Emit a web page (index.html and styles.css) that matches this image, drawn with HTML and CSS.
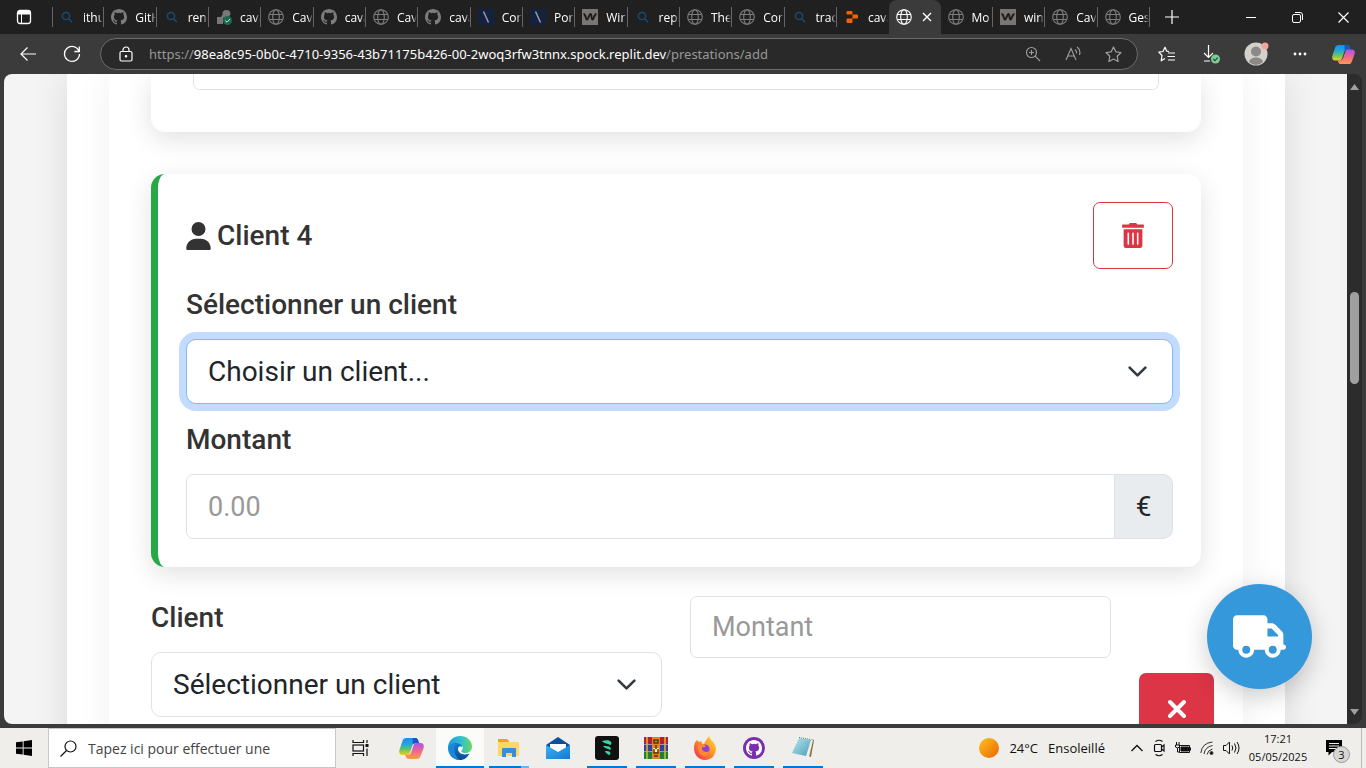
FILE: index.html
```html
<!DOCTYPE html>
<html lang="fr">
<head>
<meta charset="utf-8">
<meta name="viewport" content="width=device-width, initial-scale=1">
<title>Ajouter une prestation</title>
<link rel="stylesheet" href="styles.css">
</head>
<body>
<svg class="defs" aria-hidden="true">
  <defs>
    <linearGradient id="cp1" x1="0" y1="0" x2="0" y2="1"><stop offset="0" stop-color="#1593e8"/><stop offset=".35" stop-color="#22a6dc"/><stop offset=".65" stop-color="#5dc36a"/><stop offset="1" stop-color="#f7cb1d"/></linearGradient>
    <linearGradient id="cp2" x1="0" y1="0" x2="0" y2="1"><stop offset="0" stop-color="#a955ec"/><stop offset=".5" stop-color="#f2658e"/><stop offset="1" stop-color="#ff9b4a"/></linearGradient>
    <linearGradient id="edge1" x1="0" y1="0" x2="1" y2="0"><stop offset="0" stop-color="#2196dc"/><stop offset=".55" stop-color="#2fc2cf"/><stop offset="1" stop-color="#68d95d"/></linearGradient>
    <linearGradient id="edge2" x1="0" y1="0" x2="0" y2="1"><stop offset="0" stop-color="#1685d8"/><stop offset="1" stop-color="#0b4a93"/></linearGradient>
    <linearGradient id="sun" x1="0" y1="0" x2="1" y2="1"><stop offset="0" stop-color="#ffc31c"/><stop offset="1" stop-color="#ea6506"/></linearGradient>
    <linearGradient id="fox" x1="1" y1="0" x2="0" y2="1"><stop offset="0" stop-color="#ffe43c"/><stop offset=".45" stop-color="#ff9425"/><stop offset="1" stop-color="#f0235f"/></linearGradient>
    <linearGradient id="mail" x1="0" y1="0" x2="1" y2="1"><stop offset="0" stop-color="#35b4f4"/><stop offset="1" stop-color="#1677d4"/></linearGradient>
    <linearGradient id="pad" x1="0" y1="0" x2="1" y2="1"><stop offset="0" stop-color="#b9e6ef"/><stop offset="1" stop-color="#4d9fb6"/></linearGradient>
    <symbol id="globe" viewBox="0 0 16 16"><g fill="none" stroke="currentColor" stroke-width="1.1"><circle cx="8" cy="8" r="7.3"/><ellipse cx="8" cy="8" rx="3.3" ry="7.3"/><path d="M1.3 5.5h13.4M1.3 10.5h13.4"/></g></symbol>
    <symbol id="github" viewBox="0 0 16 16"><path fill="currentColor" d="M8 0C3.58 0 0 3.58 0 8c0 3.54 2.29 6.53 5.47 7.59.4.07.55-.17.55-.38 0-.19-.01-.82-.01-1.49-2.01.37-2.53-.49-2.69-.94-.09-.23-.48-.94-.82-1.13-.28-.15-.68-.52-.01-.53.63-.01 1.08.58 1.23.82.72 1.21 1.87.87 2.33.66.07-.52.28-.87.51-1.07-1.78-.2-3.64-.89-3.64-3.95 0-.87.31-1.59.82-2.15-.08-.2-.36-1.02.08-2.12 0 0 .67-.21 2.2.82a7.6 7.6 0 0 1 4 0c1.53-1.04 2.2-.82 2.2-.82.44 1.1.16 1.92.08 2.12.51.56.82 1.27.82 2.15 0 3.07-1.87 3.75-3.65 3.95.29.25.54.73.54 1.48 0 1.07-.01 1.93-.01 2.2 0 .21.15.46.55.38A8.01 8.01 0 0 0 16 8c0-4.42-3.58-8-8-8z"/></symbol>
    <symbol id="search" viewBox="0 0 16 16"><g fill="none" stroke="#194a70" stroke-width="1.5"><circle cx="7" cy="7" r="3.6"/><path d="M9.7 9.7l3.3 3.5"/></g></symbol>
    <symbol id="slash" viewBox="0 0 16 16"><path fill="#14213f" d="M0 0h16v16H0z"/><path stroke="#9a9da5" stroke-width="1.5" d="M5.500 2.500l5 11"/></symbol>
    <symbol id="wave" viewBox="0 0 16 16"><path fill="#7a7770" d="M0 0h16v16H0z"/><path fill="none" stroke="#1c1c1a" stroke-width="2" d="M1.500 5c2.500 0 2 5.500 3.500 5.500S7 5 8.500 5 9 10.500 10.500 10.500 12 5 14.500 5"/></symbol>
    <symbol id="replit" viewBox="0 0 16 16"><path fill="#f26207" d="M3 2h4.500q1 0 1 1v2.500H3.500q-1 0-1-1V3zM8.500 5.500H13q1 0 1 1v2q0 1-1 1H8.500zM3.500 9.500h5V13q0 1-1 1H3.500q-1 0-1-1v-2.500q0-1 1-1z"/></symbol>
    <symbol id="check" viewBox="0 0 16 16"><path fill="#777" d="M1 8h4L6.500 5.500C6 2.500 8 1 10.500 1s4 1.500 4 4L13 8 7 9v6H1z"/><circle cx="11.500" cy="11.500" r="4.500" fill="#176c50"/><path d="M9.300 11.500l1.700 1.700 3-3.200" fill="none" stroke="#ddd"/></symbol>
    <symbol id="copilot" viewBox="0 0 24 24"><path fill="url(#cp1)" d="M7 2h8.500c2 0 2.700 1.300 3.200 3l.6 2h-3.800c-1.600 0-2.300 1-2.700 2.200l-2.100 6.500c-.5 1.500-1.500 2.500-3.200 2.500H3.300C.6 18.200-.3 16 .4 13.400L3.300 4.800C3.900 3 5 2 7 2z"/><path fill="#1857c2" d="M13 2h2.500c2 0 2.700 1.300 3.200 3l.6 2h-3.800c-1 0-1.700.3-2.200 1z"/><path fill="url(#cp2)" d="M17 22H9.500c-2 0-2.700-1.300-3.200-3l-.4-1h2.600c1.700 0 2.700-1 3.200-2.500L13.900 9c.4-1.200 1.100-2.200 2.700-2.200h4.100c2.700 0 3.600 2.200 2.900 4.800l-2.900 7.600c-.6 1.800-1.700 2.800-3.700 2.800z"/></symbol>
  </defs>
</svg>

<header class="tabbar">
  <button class="tab-menu" aria-label="Menu des onglets"><svg width="16" height="16" viewBox="0 0 16 16"><rect x="1.500" y="1.500" width="13" height="13" rx="2.500" fill="none" stroke="#fff" stroke-width="1.300"/><path d="M2 2h12v3.500H2z" fill="#fff"/><path d="M5.500 5v9.500" stroke="#fff"/></svg></button>
  <nav class="tabs" aria-label="Onglets">
    <a class="tab" href="#"><svg class="fav"><use href="#search"/></svg><span>ithu</span></a>
    <a class="tab" href="#"><svg class="fav"><use href="#github"/></svg><span>GitH</span></a>
    <a class="tab" href="#"><svg class="fav"><use href="#search"/></svg><span>rend</span></a>
    <a class="tab" href="#"><svg class="fav"><use href="#check"/></svg><span>cava</span></a>
    <a class="tab" href="#"><svg class="fav"><use href="#globe"/></svg><span>Cav</span></a>
    <a class="tab" href="#"><svg class="fav"><use href="#github"/></svg><span>cava</span></a>
    <a class="tab" href="#"><svg class="fav"><use href="#globe"/></svg><span>Cav</span></a>
    <a class="tab" href="#"><svg class="fav"><use href="#github"/></svg><span>cava</span></a>
    <a class="tab" href="#"><svg class="fav"><use href="#slash"/></svg><span>Cor</span></a>
    <a class="tab" href="#"><svg class="fav"><use href="#slash"/></svg><span>Por</span></a>
    <a class="tab" href="#"><svg class="fav"><use href="#wave"/></svg><span>Wir</span></a>
    <a class="tab" href="#"><svg class="fav"><use href="#search"/></svg><span>repl</span></a>
    <a class="tab" href="#"><svg class="fav"><use href="#globe"/></svg><span>The</span></a>
    <a class="tab" href="#"><svg class="fav"><use href="#globe"/></svg><span>Cor</span></a>
    <a class="tab" href="#"><svg class="fav"><use href="#search"/></svg><span>trac</span></a>
    <a class="tab before-active" href="#"><svg class="fav"><use href="#replit"/></svg><span>cava</span></a>
    <div class="tab active"><svg class="fav"><use href="#globe"/></svg><button class="tab-close" aria-label="Fermer l'onglet"><svg width="10" height="10" viewBox="0 0 10 10"><path d="M1 1l8 8M9 1L1 9" stroke="#fff" stroke-width="1.400"/></svg></button></div>
    <a class="tab" href="#"><svg class="fav"><use href="#globe"/></svg><span>Mo</span></a>
    <a class="tab" href="#"><svg class="fav"><use href="#wave"/></svg><span>win</span></a>
    <a class="tab" href="#"><svg class="fav"><use href="#globe"/></svg><span>Cav</span></a>
    <a class="tab" href="#"><svg class="fav"><use href="#globe"/></svg><span>Ges</span></a>
  </nav>
  <button class="new-tab" aria-label="Nouvel onglet"><svg width="14" height="14" viewBox="0 0 14 14"><path d="M7 0v14M0 7h14" stroke="#fff" stroke-width="1.200"/></svg></button>
  <div class="window-controls">
    <button aria-label="Réduire"><svg width="10" height="10"><path d="M0 5.500h10" stroke="#fff"/></svg></button>
    <button aria-label="Restaurer"><svg width="11" height="11" fill="none" stroke="#fff"><rect x=".5" y="2.500" width="8" height="8" rx="1.500"/><path d="M3 .5h5q2.500 0 2.500 2.500v5"/></svg></button>
    <button aria-label="Fermer"><svg width="11" height="11"><path d="M.5.5l10 10M10.500.5l-10 10" stroke="#fff" stroke-width="1.200"/></svg></button>
  </div>
</header>

<div class="toolbar">
  <div class="nav-buttons">
    <button aria-label="Retour"><svg width="16" height="14" viewBox="0 0 16 14" fill="none" stroke="#fff" stroke-width="1.200"><path d="M7.500.5L1 7l6.500 6.500M1 7h15"/></svg></button>
    <button aria-label="Actualiser"><svg width="18" height="18" viewBox="0 0 18 18" fill="none" stroke="#fff" stroke-width="1.300"><path d="M16 6.200A7.500 7.500 0 1 0 16.500 9M16.300 1.500v5h-5"/></svg></button>
  </div>
  <div class="address">
    <svg width="14" height="16" viewBox="0 0 14 16" fill="none" stroke="#fff" stroke-width="1.200"><rect x="1" y="5.500" width="12" height="9.500" rx="1.500"/><path d="M4 5.500V4a3 3 0 0 1 6 0v1.500"/><circle cx="7" cy="10.200" r=".7" fill="#fff"/></svg>
    <div class="url">https://<b>98ea8c95-0b0c-4710-9356-43b71175b426-00-2woq3rfw3tnnx.spock.replit.dev</b>/prestations/add</div>
    <div class="address-actions">
      <button aria-label="Zoom"><svg width="16" height="16" viewBox="0 0 16 16" fill="none" stroke="#a0a0a0" stroke-width="1.100"><circle cx="6.500" cy="6.500" r="5"/><path d="M10.200 10.200l4.800 4.800M4 6.500h5M6.500 4v5"/></svg></button>
      <button aria-label="Lecture à voix haute"><svg width="17" height="16" viewBox="0 0 17 16" fill="none" stroke="#a0a0a0" stroke-width="1.100"><path d="M1 14L6 2.500 11 14M2.800 10h6.400M10 3.500q2 1.500 1.500 4M12 1q4 3 2.500 8"/></svg></button>
      <button aria-label="Favori"><svg width="17" height="17" viewBox="0 0 17 17" fill="none" stroke="#a0a0a0" stroke-width="1.200" stroke-linejoin="round"><path d="M8.500 1l2.300 4.800 5.200.7-3.800 3.700.9 5.300-4.600-2.500-4.600 2.500.9-5.300L1 6.500l5.200-.7z"/></svg></button>
    </div>
  </div>
  <div class="toolbar-actions">
    <button aria-label="Favoris"><svg width="18" height="17" viewBox="0 0 18 17" fill="none" stroke="#fff" stroke-width="1.200" stroke-linejoin="round"><path d="M11 5.500L8.800 5.200 7 1.200 5 5.500.8 6.200 4 9.500l-.8 5.300L7 12.500M10 7h7M9.500 10.500H17M10 14h7"/></svg></button>
    <button aria-label="Téléchargements"><svg width="20" height="20" viewBox="0 0 20 20" fill="none" stroke="#fff" stroke-width="1.200"><path d="M7.500 1v12M3 9l4.500 4.500L12 9M3 17h6"/><circle cx="14.500" cy="15" r="4.500" fill="#7ecb97" stroke="none"/><path d="M12.300 15l1.700 1.700 2.700-3" stroke="#294a35"/></svg></button>
    <button aria-label="Profil"><svg width="26" height="26" viewBox="0 0 26 26"><circle cx="13" cy="13" r="11.500" fill="#d4d1cd"/><circle cx="13" cy="10.500" r="5" fill="#8d8986"/><path d="M6 21q1-4.500 7-4.500t7 4.500Q17 24 13 24t-7-3z" fill="#8d8986"/><circle cx="22" cy="5" r="3.500" fill="#f5a49c"/></svg></button>
    <button aria-label="Paramètres et plus"><svg width="14" height="4" fill="#fff"><circle cx="2" cy="2" r="1.400"/><circle cx="7" cy="2" r="1.400"/><circle cx="12" cy="2" r="1.400"/></svg></button>
    <button aria-label="Copilot"><svg width="23" height="23"><use href="#copilot"/></svg></button>
  </div>
</div>

<div class="frame">
  <main class="page">
    <div class="container">
      <form class="panel">
        <section class="card card-previous">
          <textarea class="control notes" aria-label="Notes"></textarea>
        </section>

        <section class="card card-client">
          <div class="card-header">
            <h2><svg width="25" height="28" viewBox="0 0 448 512" fill="currentColor"><path d="M224 256A128 128 0 1 0 224 0a128 128 0 1 0 0 256zm-45.700 48C79.800 304 0 383.800 0 482.300C0 498.700 13.300 512 29.700 512H418.300c16.400 0 29.700-13.300 29.700-29.700C448 383.800 368.200 304 269.700 304H178.300z"/></svg>Client 4</h2>
            <button type="button" class="btn-delete" aria-label="Supprimer le client"><svg width="22" height="25" viewBox="0 0 448 512" fill="currentColor"><path d="M32 464a48 48 0 0 0 48 48h288a48 48 0 0 0 48-48V128H32zm272-256a16 16 0 0 1 32 0v224a16 16 0 0 1-32 0zm-96 0a16 16 0 0 1 32 0v224a16 16 0 0 1-32 0zm-96 0a16 16 0 0 1 32 0v224a16 16 0 0 1-32 0zM432 32H312l-9.400-18.700A24 24 0 0 0 281.100 0H166.800a23.720 23.720 0 0 0-21.400 13.300L136 32H16A16 16 0 0 0 0 48v32a16 16 0 0 0 16 16h416a16 16 0 0 0 16-16V48a16 16 0 0 0-16-16z"/></svg></button>
          </div>
          <label for="client4">Sélectionner un client</label>
          <div class="select-wrap">
            <select id="client4" class="control focused"><option>Choisir un client...</option></select>
            <svg class="chevron" viewBox="0 0 16 16"><path d="M2 5l6 6 6-6"/></svg>
          </div>
          <label for="amount4">Montant</label>
          <div class="input-group">
            <input id="amount4" class="control" type="text" inputmode="decimal" placeholder="0.00">
            <span class="addon">€</span>
          </div>
        </section>

        <div class="row">
          <div class="row-client">
            <label for="client-row">Client</label>
            <div class="select-wrap">
              <select id="client-row" class="control"><option>Sélectionner un client</option></select>
              <svg class="chevron" viewBox="0 0 16 16"><path d="M2 5l6 6 6-6"/></svg>
            </div>
          </div>
          <input class="control row-amount" type="text" placeholder="Montant" aria-label="Montant">
          <button type="button" class="btn-remove" aria-label="Retirer"><svg width="20" height="20" viewBox="0 0 20 20"><path d="M3 3l14 14M17 3L3 17" stroke="#fff" stroke-width="4" stroke-linecap="round"/></svg></button>
        </div>
      </form>
    </div>
    <button class="fab" aria-label="Prestations"><svg width="53" height="43" viewBox="0 0 640 512" fill="currentColor"><path d="M48 0C21.500 0 0 21.500 0 48V368c0 26.500 21.500 48 48 48H64c0 53 43 96 96 96s96-43 96-96H384c0 53 43 96 96 96s96-43 96-96h32c17.700 0 32-14.300 32-32s-14.300-32-32-32V288 256 237.300c0-17-6.700-33.300-18.700-45.300L512 114.700c-12-12-28.300-18.700-45.300-18.700H416V48c0-26.500-21.500-48-48-48H48zM416 160h50.700L544 237.300V256H416V160zM112 416a48 48 0 1 1 96 0 48 48 0 1 1 -96 0zm368-48a48 48 0 1 1 0 96 48 48 0 1 1 0-96z"/></svg></button>
  </main>
  <div class="scrollbar" aria-hidden="true">
    <svg width="9" height="6" fill="#a0a0a0"><path d="M0 6L4.500 0 9 6z"/></svg>
    <div class="space-above"></div>
    <div class="thumb"></div>
    <div class="space-below"></div>
    <svg width="9" height="6" fill="#a0a0a0"><path d="M0 0h9L4.500 6z"/></svg>
  </div>
</div>

<footer class="taskbar">
  <button class="start" aria-label="Démarrer"><svg width="16" height="16" viewBox="0 0 16 16"><path d="M0 2.300L6.700 1.400v6.200H0zM7.600 1.200L16 0v7.600H7.600zM0 8.400h6.700v6.200L0 13.700zM7.600 8.400H16V16l-8.400-1.200z"/></svg></button>
  <div class="search-box">
    <svg width="17" height="17" viewBox="0 0 17 17" fill="none" stroke="#111" stroke-width="1.200"><circle cx="10.500" cy="6.500" r="5.500"/><path d="M6.500 10.500L.5 16.500"/></svg>
    <input type="text" placeholder="Tapez ici pour effectuer une" aria-label="Recherche">
  </div>
  <button class="task task-view" aria-label="Vue des tâches"><svg width="17" height="16" viewBox="0 0 17 16" fill="none" stroke="#111" stroke-width="1.200"><path d="M1 0v2.500h10.500V0M1 16v-2.500h10.500V16M15 0v3M15 8.500V16"/><rect x="1" y="5" width="10.500" height="6"/><path d="M13.500 4h3v3h-3z" fill="#111" stroke="none"/></svg></button>
  <div class="apps">
    <button class="task" aria-label="Copilot"><svg width="25" height="25"><use href="#copilot"/></svg></button>
    <button class="task current" aria-label="Microsoft Edge"><svg width="24" height="24" viewBox="0 0 24 24"><path fill="url(#edge2)" d="M1 10C2 5 6 3 10 5c3 1.500 5 4 4 6-1.500-1.500-4-.5-4 2 0 4 5 7 11.500 4.500C19 22 16 24 12 24 5 24 0 18 1 10z"/><path fill="#1689d8" d="M0 12C0 8 4 6.500 8 8.200 5 12 6 20 12 24 5 24 0 19 0 12z"/><path fill="url(#edge1)" d="M0 12C0 5 5 0 12 0c7 0 12 5 12 10.500 0 4-3 6.500-6.500 6.500-3 0-5-1.300-3.500-3 2.500-3-1-7-6-7-4.500 0-7.500 2.500-8 5z"/></svg></button>
    <button class="task open multiple" aria-label="Explorateur de fichiers"><svg width="22" height="19" viewBox="0 0 22 19"><path fill="#e8a713" d="M0 0h9l2 2v3H0z"/><path fill="#ffd765" d="M0 3h21v14H0z"/><path fill="#3a8bd8" d="M4 10q0-1 1-1h12q1 0 1 1v8h-4v-4H8v4H4z"/></svg></button>
    <button class="task" aria-label="Courrier"><svg width="24" height="22" viewBox="0 0 24 22"><path fill="#0c4f9c" d="M0 8L12 0l12 8-1 3H1z"/><path fill="#fff" d="M4 7h16v4l-8 5-8-5z"/><path fill="url(#mail)" d="M0 8l12 7 12-7v14H0z"/></svg></button>
    <button class="task open" aria-label="Application"><svg width="24" height="24" viewBox="0 0 24 24"><rect width="24" height="24" rx="3" fill="#111"/><path fill="#36d6a0" d="M7 5c4-1 8-1 9 1 1 1 0 3-1 3-2-2-6-1-8-4zm1 5c3 0 6 0 7 1s1 3 0 3c-2-2-5-1-7-4zm2 5c3 0 4 0 5 1s0 3-1 3c-1-1-3-1-4-4z"/></svg></button>
    <button class="task open" aria-label="WinRAR"><svg width="24" height="22" viewBox="0 0 24 22"><path fill="#b32035" d="M0 0h24v7H0z"/><path fill="#3c3d9a" d="M0 7.500h24v7H0z"/><path fill="#19833c" d="M0 15h24v7H0z"/><path fill="none" stroke="#e5b930" stroke-width="1.500" d="M3 0v22M21 0v22"/><path fill="#de8722" d="M8 0h8v22H8z"/><path fill="#fff0b0" d="M9 11h6v4H9z"/><path fill="none" stroke="#5b3312" stroke-width="1.500" d="M10 3h4v3h-4zM10 12v4h4v-4M12 8v4M10 19h4"/></svg></button>
    <button class="task open" aria-label="Firefox"><svg width="24" height="24" viewBox="0 0 24 24"><path fill="url(#fox)" d="M4 4l2 2 3-1c-1 2 0 3 2 3 1-3 3-5 5-8 1 4 6 6 7 12 0 7-4 12-11 12S1 18 1 12c0-4 1-6 3-8z"/><circle cx="12" cy="13" r="4.500" fill="#8842d6"/><path fill="#ff8930" d="M5 8q4-1 8 2-2 2-4 1-1 4 4 5 3 0 4-2-1 6-6 6-7-1-6-12z"/></svg></button>
    <button class="task open" aria-label="GitHub Desktop"><svg width="22" height="22" viewBox="0 0 22 22"><circle cx="11" cy="11" r="11" fill="#7b2fae"/><svg x="3" y="3" width="16" height="16" color="#fff"><use href="#github"/></svg></svg></button>
    <button class="task open" aria-label="Bloc-notes"><svg width="24" height="24" viewBox="0 0 24 24"><path fill="#8d7040" d="M20 3l3 1-3 17-3-1z"/><path fill="#eee" d="M19 3l3 1-4 17-17-3z"/><path fill="url(#pad)" d="M8 2l12 2-5 16-14-3z"/><path stroke="#647b80" stroke-dasharray="1 1" d="M8 1.500l12 2"/></svg></button>
  </div>
  <div class="tray">
    <button class="weather"><svg width="20" height="20"><circle cx="10" cy="10" r="10" fill="url(#sun)"/></svg><span>24°C</span><span>Ensoleillé</span></button>
    <div class="tray-icons">
      <svg width="12" height="8" fill="none" stroke="#111" stroke-width="1.300"><path d="M.5 7L6 1.500 11.500 7"/></svg>
      <svg width="14" height="18" viewBox="0 0 14 18" fill="none" stroke="#111" stroke-width="1.200"><rect x="2.500" y="5.500" width="7" height="7" rx="1"/><path d="M9.500 8L12 6v6l-2.500-2M3.500 2.500Q7 0 10.500 2.500M3.500 15.500q3.500 2.500 7 0"/></svg>
      <svg width="16" height="12" viewBox="0 0 16 12" fill="none" stroke="#111"><path d="M4.500 3.500h10v7h-10zM15.500 5.500v3M1.500 0v3M4 0v3M.5 3h4v2q-2 2-4 0zM2.500 6v4h2"/><path d="M6 5h7.500v4H6z" fill="#111"/></svg>
      <svg width="14" height="14" viewBox="0 0 14 14" fill="none" stroke="#333"><path d="M.8 12Q2 2 12.500 1M4 13Q5 6 12.500 4.500M7 13.500Q8 9 12.500 8"/><circle cx="11.500" cy="12" r="1.500" fill="#111"/></svg>
      <svg width="17" height="14" viewBox="0 0 17 14" fill="none" stroke="#111"><path d="M.5 4.500H3L6.500 1v12L3 9.500H.5zM9 4.500q1.500 2.500 0 5M11.500 2.500q3 4.500 0 9M14 1q4 6 0 12"/></svg>
    </div>
    <div class="clock"><span>17:21</span><span>05/05/2025</span></div>
    <button class="notifications" aria-label="Notifications"><svg width="16" height="16" viewBox="0 0 16 16"><path d="M0 0h16v12H6l-3.500 3.500V12H0z"/><path d="M3 3.500h10M3 6h10M3 8.500h7" stroke="#efeeea"/></svg><span class="badge">3</span></button>
    <div class="show-desktop"></div>
  </div>
</footer>
</body>
</html>
```
FILE: styles.css
```css
* { box-sizing: border-box; }

body {
  margin: 0;
  height: 100vh;
  display: flex;
  flex-direction: column;
  overflow: hidden;
  background: #3b3b3b;
  font-family: "Open Sans", "Noto Sans", sans-serif;
  font-size: 12px;
}

button {
  margin: 0;
  padding: 0;
  border: 0;
  background: none;
  color: inherit;
  font: inherit;
  display: flex;
  align-items: center;
  justify-content: center;
}

svg { flex: none; display: block; }
.defs { position: absolute; width: 0; height: 0; }

/* Tab strip */
.tabbar {
  flex: none;
  height: 34px;
  display: flex;
  background: #202020;
  color: #fff;
}
.tab-menu { width: 48px; }
.tabs { flex: 1; display: flex; padding-left: 4px; min-width: 0; }
.tab {
  flex: 1 1 0;
  min-width: 0;
  margin: 7px 0;
  padding-left: 7px;
  display: flex;
  align-items: center;
  gap: 8px;
  overflow: hidden;
  border-right: 1px solid #666;
  color: #fff;
  text-decoration: none;
  white-space: nowrap;
}
.tabs > :first-child { box-shadow: inset 1px 0 #666; }
.tab span {
  flex: 1;
  min-width: 0;
  overflow: hidden;
  mask-image: linear-gradient(to right, #000 75%, transparent);
}
.fav { width: 16px; height: 16px; color: #7c7c7c; }
.before-active { border-color: transparent; }
.tab.active {
  margin: 0;
  border: 0;
  border-radius: 8px 8px 0 0;
  background: #3b3b3b;
}
.active .fav { color: #fff; }
.tab-close { width: 14px; height: 16px; }
.new-tab { width: 44px; }
.window-controls { display: flex; padding-left: 34px; }
.window-controls button { width: 46px; }

/* Address bar */
.toolbar {
  flex: none;
  height: 40px;
  display: flex;
  align-items: center;
}
.nav-buttons { display: flex; width: 100px; padding-left: 6px; }
.nav-buttons button { width: 44px; }
.address {
  flex: 1;
  min-width: 0;
  height: 32px;
  display: flex;
  align-items: center;
  padding: 0 4px 0 18px;
  border: 1px solid #6c6c6c;
  border-radius: 16px;
  background: #292929;
}
.url {
  flex: 1;
  min-width: 0;
  overflow: hidden;
  margin-left: 16px;
  color: #989898;
  font-family: "Noto Sans", sans-serif;
  font-size: 13px;
  white-space: nowrap;
}
.url b { color: #fff; font-weight: 400; }
.address-actions { display: flex; }
.address-actions button { width: 40px; }
.toolbar-actions { display: flex; width: 228px; padding-left: 7px; }
.toolbar-actions button { flex: 1; }

/* Web page viewport */
.frame {
  flex: 1;
  min-height: 0;
  margin: 0 4px 4px;
  display: flex;
  overflow: hidden;
  border-radius: 8px;
  background: #2c2c2c;
}
.page {
  flex: 1;
  min-width: 0;
  position: relative;
  overflow: hidden;
  padding: 0 62px 0 63px;
  background: #f4f4f4;
  color: #333;
  font-family: Roboto, sans-serif;
  font-size: 28px;
  line-height: 42px;
}
.container {
  min-height: 100%;
  padding: 0 42px;
  background: #fff;
  box-shadow: 0 0 35px rgba(0, 0, 0, .1);
}
.panel {
  min-height: 700px;
  padding: 0 42px;
  background: #fff;
  box-shadow: 0 0 35px rgba(0, 0, 0, .06);
}
.card {
  background: #fff;
  border-radius: 14px;
  box-shadow: 0 7px 26px rgba(0, 0, 0, .12);
}
.card-previous {
  padding: 0 42px 42px;
  margin-bottom: 42px;
  border-radius: 0 0 14px 14px;
}
.card-client {
  margin-bottom: 29px;
  padding: 28px;
  border-left: 7px solid #28a745;
}
.card-header {
  display: flex;
  justify-content: space-between;
  margin-bottom: 15px;
}
.card-header h2 {
  display: flex;
  align-items: center;
  gap: 6px;
  margin: 0;
  font-size: 28px;
  font-weight: 500;
}
.btn-delete {
  width: 80px;
  height: 67px;
  border: 1px solid #dc3545;
  border-radius: 7px;
  color: #dc3545;
}
label { display: block; margin-bottom: 13px; font-weight: 500; }
.control {
  display: block;
  width: 100%;
  height: 65px;
  margin: 0;
  padding: 0 21px;
  border: 1px solid #dee2e6;
  border-radius: 10px;
  outline: 0;
  background: #fff;
  color: #212529;
  font: inherit;
}
.control::placeholder { color: #999; opacity: 1; }
select.control { appearance: none; }
input.control { font-size: 27px; }
.notes {
  height: 16px;
  border-top: 0;
  border-radius: 0 0 7px 7px;
  resize: none;
}
.select-wrap { position: relative; }
.card .select-wrap { margin-bottom: 15px; }
.control.focused {
  border-color: #86b7fe;
  box-shadow: 0 0 0 7px #c2dbff;
}
.chevron {
  position: absolute;
  right: 25px;
  top: 50%;
  width: 21px;
  height: 21px;
  margin-top: -11px;
  pointer-events: none;
  fill: none;
  stroke: #343a40;
  stroke-width: 2;
  stroke-linecap: round;
  stroke-linejoin: round;
}
.input-group { display: flex; }
.input-group .control { flex: 1; min-width: 0; border-radius: 7px 0 0 7px; }
.addon {
  width: 58px;
  display: flex;
  align-items: center;
  justify-content: center;
  border: 1px solid #dee2e6;
  border-left: 0;
  border-radius: 0 10px 10px 0;
  background: #e9ecef;
  color: #212529;
}
.row {
  display: grid;
  grid-template-columns: 511fr 421fr 75px;
  gap: 28px;
  margin-right: -13px;
  align-items: start;
}
.row-client { padding-top: 1px; }
.row-amount { height: 62px; border-radius: 7px; }
.btn-remove {
  height: 72px;
  margin-top: 77px;
  border-radius: 7px;
  background: #dc3545;
}
.fab {
  position: absolute;
  right: 35px;
  bottom: 35px;
  width: 105px;
  height: 105px;
  border-radius: 50%;
  background: #3498db;
  color: #fff;
  box-shadow: 0 7px 26px rgba(0, 0, 0, .2);
}

/* Scrollbar */
.scrollbar {
  flex: none;
  width: 15px;
  display: flex;
  flex-direction: column;
  align-items: center;
  padding: 10px 0 9px;
}
.thumb { width: 9px; height: 92px; border-radius: 5px; background: #9f9f9f; }
.space-above { flex: 202; }
.space-below { flex: 325; }

/* Taskbar */
.taskbar {
  flex: none;
  height: 40px;
  display: flex;
  background: #efeeea;
  color: #111;
}
.start { width: 48px; }
.search-box {
  width: 288px;
  display: flex;
  align-items: center;
  gap: 11px;
  padding-left: 11px;
  border: 1px solid #c6c6c4;
  background: #fff;
}
.search-box input {
  flex: 1;
  min-width: 0;
  padding: 0;
  border: 0;
  outline: 0;
  background: none;
  font: inherit;
  font-size: 14px;
}
.search-box input::placeholder { color: #444; opacity: 1; }
.task { width: 48px; height: 40px; }
.apps { display: flex; gap: 1px; margin-left: 3px; }
.current { background: #fbfbfa; box-shadow: inset 0 -2px #0078d7; }
.open {
  background: linear-gradient(#0078d7, #0078d7) center bottom / 40px 2px no-repeat;
}
.multiple {
  background-image: linear-gradient(to right, #0078d7 80%, #76b0e2 80%);
}
.tray { display: flex; align-items: center; margin-left: auto; }
.weather { gap: 10px; font-size: 13px; }
.tray-icons {
  display: flex;
  align-items: center;
  gap: 9px;
  margin-left: 26px;
}
.clock {
  width: 76px;
  display: flex;
  flex-direction: column;
  align-items: center;
  font-size: 11px;
  line-height: 18px;
}
.notifications { position: relative; width: 45px; height: 40px; padding-right: 10px; }
.badge {
  position: absolute;
  left: 17px;
  top: 18px;
  width: 17px;
  height: 17px;
  border: 1px solid #999;
  border-radius: 50%;
  background: #d6d6d4;
  font-size: 11px;
  line-height: 15px;
}
.show-desktop { width: 5px; height: 40px; border-left: 1px solid #bbb; }
```
